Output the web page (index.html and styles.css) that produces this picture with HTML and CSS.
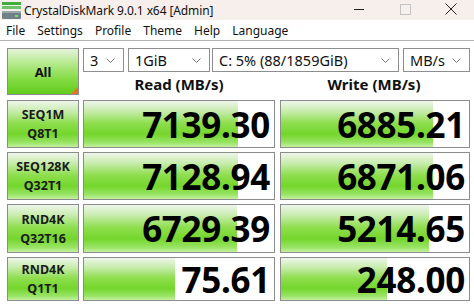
FILE: index.html
```html
<!DOCTYPE html>
<html>
<head>
<meta charset="utf-8">
<link rel="stylesheet" href="styles.css">
</head>
<body>
<div class="window">
  <div class="titlebar">
    <svg class="appicon" width="20" height="18" viewBox="0 0 20 18">
      <rect x="0" y="0" width="19" height="3" fill="#3fae3f"/>
      <rect x="0" y="4" width="19" height="3" fill="#6cc46a"/>
      <rect x="0" y="9" width="19" height="8" rx="1" fill="#6e8088"/>
      <rect x="0" y="9" width="19" height="2" fill="#9aa8ae"/>
      <rect x="13" y="13" width="3" height="2" fill="#7ddc5a"/>
    </svg>
    <span class="title">CrystalDiskMark 9.0.1 x64 [Admin]</span>
    <div class="controls">
      <svg class="ctl" width="46" height="20" viewBox="0 0 46 20"><line x1="18" y1="9.5" x2="28" y2="9.5" stroke="#222" stroke-width="1"/></svg>
      <svg class="ctl" width="46" height="20" viewBox="0 0 46 20"><rect x="18.5" y="4.5" width="10" height="10" fill="none" stroke="#c4c4c4" stroke-width="1"/></svg>
      <svg class="ctl" width="46" height="20" viewBox="0 0 46 20"><path d="M17.5 3.5 L28.5 14.5 M28.5 3.5 L17.5 14.5" stroke="#222" stroke-width="1"/></svg>
    </div>
  </div>
  <div class="menubar">
    <span class="mi">File</span>
    <span class="mi">Settings</span>
    <span class="mi">Profile</span>
    <span class="mi">Theme</span>
    <span class="mi">Help</span>
    <span class="mi">Language</span>
  </div>
  <div class="main">
    <div class="top">
      <div class="allbtn"><span>All</span><i class="corner"></i></div>
      <div class="topright">
        <div class="selects">
          <div class="sel s1"><span>3</span><svg class="chev" width="9" height="5" viewBox="0 0 9 5"><path d="M0.5 0.5 L4.5 4.5 L8.5 0.5" fill="none" stroke="#777" stroke-width="1"/></svg></div>
          <div class="sel s2"><span>1GiB</span><svg class="chev" width="9" height="5" viewBox="0 0 9 5"><path d="M0.5 0.5 L4.5 4.5 L8.5 0.5" fill="none" stroke="#777" stroke-width="1"/></svg></div>
          <div class="sel s3"><span>C: 5% (88/1859GiB)</span><svg class="chev" width="9" height="5" viewBox="0 0 9 5"><path d="M0.5 0.5 L4.5 4.5 L8.5 0.5" fill="none" stroke="#777" stroke-width="1"/></svg></div>
          <div class="sel s4"><span>MB/s</span><svg class="chev" width="9" height="5" viewBox="0 0 9 5"><path d="M0.5 0.5 L4.5 4.5 L8.5 0.5" fill="none" stroke="#777" stroke-width="1"/></svg></div>
        </div>
        <div class="heads">
          <div class="head hr">Read (MB/s)</div>
          <div class="head hw">Write (MB/s)</div>
        </div>
      </div>
    </div>
    <div class="grid">
      <div class="label"><span>SEQ1M</span><span>Q8T1</span></div>
      <div class="cell"><div class="bar" style="width:80.9%"></div><span class="val">7139.30</span></div>
      <div class="cell"><div class="bar" style="width:80.6%"></div><span class="val">6885.21</span></div>

      <div class="label"><span>SEQ128K</span><span>Q32T1</span></div>
      <div class="cell"><div class="bar" style="width:80.9%"></div><span class="val">7128.94</span></div>
      <div class="cell"><div class="bar" style="width:80.6%"></div><span class="val">6871.06</span></div>

      <div class="label"><span>RND4K</span><span>Q32T16</span></div>
      <div class="cell"><div class="bar" style="width:80.5%"></div><span class="val">6729.39</span></div>
      <div class="cell"><div class="bar" style="width:78.6%"></div><span class="val">5214.65</span></div>

      <div class="label"><span>RND4K</span><span>Q1T1</span></div>
      <div class="cell"><div class="bar" style="width:48%"></div><span class="val">75.61</span></div>
      <div class="cell"><div class="bar" style="width:56.6%"></div><span class="val">248.00</span></div>
    </div>
  </div>
</div>
</body>
</html>
```
FILE: styles.css
```css
html, body {
  margin: 0;
  padding: 0;
  background: #ffffff;
}
body {
  width: 474px;
  height: 305px;
  overflow: hidden;
  font-family: "Noto Sans", "Open Sans", sans-serif;
  color: #000;
}
.window {
  width: 474px;
  height: 305px;
  display: flex;
  flex-direction: column;
}
.titlebar {
  height: 20px;
  background: #f7efec;
  display: flex;
  align-items: center;
}
.appicon {
  margin-left: 2px;
  margin-top: 1px;
  flex: none;
}
.title {
  margin-left: 2px;
  font-size: 12px;
  letter-spacing: -0.1px;
  color: #111;
  white-space: nowrap;
}
.controls {
  margin-left: auto;
  display: flex;
}
.ctl {
  display: block;
}
.menubar {
  height: 20px;
  display: flex;
  align-items: center;
  padding-left: 6px;
  gap: 12px;
  font-size: 12px;
  color: #111;
  border-bottom: 1px solid #b4b4b4;
}
.main {
  padding: 7px 0 0 7px;
  display: flex;
  flex-direction: column;
  gap: 5px;
}
.top {
  display: flex;
  gap: 4px;
  height: 47px;
}
.allbtn {
  width: 70px;
  height: 45px;
  border: 1px solid #8c8c8c;
  background: linear-gradient(to bottom, #e4f4da 0%, #b8ea92 30%, #86dc46 65%, #62cc1c 100%);
  display: flex;
  align-items: center;
  justify-content: center;
  position: relative;
  font-weight: 700;
  font-size: 13px;
  color: #111;
}
.corner {
  position: absolute;
  right: 0;
  bottom: 0;
  width: 0;
  height: 0;
  border-style: solid;
  border-width: 0 0 7px 7px;
  border-color: transparent transparent #e8731c transparent;
}
.topright {
  display: flex;
  flex-direction: column;
}
.selects {
  display: flex;
  height: 24px;
}
.sel {
  box-sizing: border-box;
  height: 24px;
  border: 1px solid #8e8e8e;
  background: #fff;
  display: flex;
  align-items: center;
  padding-left: 6px;
  padding-right: 8px;
  font-size: 14.5px;
  color: #111;
}
.sel span {
  flex: 1;
  white-space: nowrap;
}
.chev {
  flex: none;
}
.s1 { width: 41px; }
.s2 { width: 82px; margin-left: 4px; }
.s3 { width: 187px; margin-left: 2px; }
.s4 { width: 67px; margin-left: 4px; }
.heads {
  display: flex;
  height: 23px;
  align-items: center;
}
.head {
  text-align: center;
  font-weight: 700;
  font-size: 15px;
  color: #111;
}
.hr { width: 192px; }
.hw { width: 190px; margin-left: 4px; }
.grid {
  display: grid;
  grid-template-columns: 72px 192px 191px;
  grid-template-rows: 48px 48px 49px 44px;
  column-gap: 4px;
  row-gap: 4px;
}
.grid > .cell:nth-child(3n) {
  margin-left: 1px;
}
.label {
  box-sizing: border-box;
  border: 1px solid #8c8c8c;
  background: linear-gradient(to bottom, #eef6ea 0%, #c8ecae 22%, #8ede4e 48%, #74d62c 72%, #98e464 90%, #c4f0a0 100%);
  display: flex;
  flex-direction: column;
  align-items: center;
  justify-content: center;
  gap: 4px;
  font-weight: 700;
  font-size: 12.5px;
  line-height: 15px;
  color: #1a1a1a;
}
.cell {
  box-sizing: border-box;
  border: 1px solid #8c8c8c;
  background: #fff;
  position: relative;
  display: flex;
  align-items: center;
  justify-content: flex-end;
  padding-right: 4px;
}
.bar {
  position: absolute;
  left: 0;
  top: 0;
  bottom: 0;
  background: linear-gradient(to bottom, #eef6ea 0%, #c8ecae 22%, #8ede4e 48%, #74d62c 72%, #98e464 90%, #c4f0a0 100%);
}
.val {
  position: relative;
  font-weight: 700;
  font-size: 35px;
  line-height: 1;
  letter-spacing: -0.3px;
  color: #000;
}
```
